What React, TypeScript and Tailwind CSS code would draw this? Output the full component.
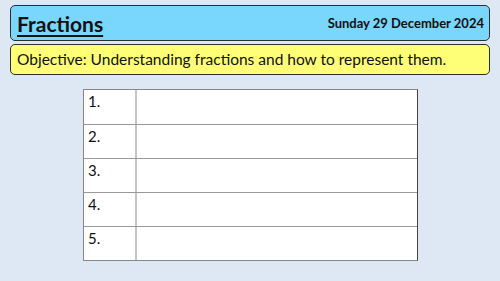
export default function App() {
  const rows = ["1.", "2.", "3.", "4.", "5."];
  return (
    <div
      className="w-[500px] h-[281px] bg-[#dee8f4] flex flex-col pt-[5px] px-[10px]"
      style={{ fontFamily: "Lato, 'Open Sans', sans-serif" }}
    >
      <div className="h-[36px] rounded-[5px] border border-[#2e2e2e] bg-[#79d6fd] flex items-center justify-between pl-[6px] pr-[5px]">
        <span className="text-[21px] font-bold underline underline-offset-[3px] decoration-[1.5px] text-[#111] leading-none">
          Fractions
        </span>
        <span className="text-[13px] font-bold text-[#111] leading-none">
          Sunday 29 December 2024
        </span>
      </div>
      <div className="mt-[3px] h-[31px] rounded-[5px] border border-[#2e2e2e] bg-[#ffff77] flex items-center pl-[6px]">
        <span className="text-[15.5px] text-[#111] leading-none">
          Objective: Understanding fractions and how to represent them.
        </span>
      </div>
      <div className="mt-[14px] ml-[73px] w-[335px] border border-[#888] border-r-[#444] bg-white flex flex-col">
        {rows.map((r, i) => (
          <div
            key={r}
            className={`h-[34px] flex ${i > 0 ? "border-t border-[#999]" : ""}`}
          >
            <div className="w-[53px] border-r-2 border-[#c4c4c4] pl-[4px] pt-[4px] text-[15px] text-[#111] leading-none">
              {r}
            </div>
            <div className="flex-1" />
          </div>
        ))}
      </div>
    </div>
  );
}
